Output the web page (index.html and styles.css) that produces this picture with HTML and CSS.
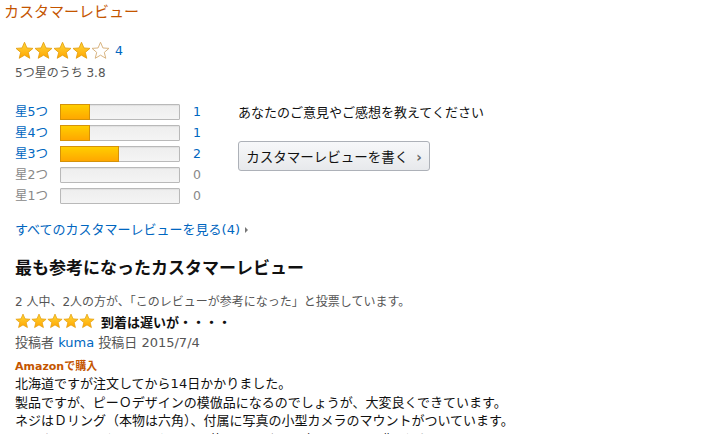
FILE: index.html
```html
<!DOCTYPE html>
<html lang="ja">
<head>
    <meta charset="UTF-8">
    <title>カスタマーレビュー</title>
    <link rel="stylesheet" href="styles.css">
</head>
<body>
    <svg width="0" height="0" class="defs">
        <defs>
            <linearGradient id="gold" x1="0" y1="0" x2="0" y2="1">
                <stop offset="0" stop-color="#ffd83a"/>
                <stop offset="1" stop-color="#ffa500"/>
            </linearGradient>
            <path id="star" d="M9 1.2 L11.3 6.6 L17 7 L12.6 10.8 L14 16.4 L9 13.4 L4 16.4 L5.4 10.8 L1 7 L6.7 6.6 Z"/>
        </defs>
    </svg>

    <h1 class="title">カスタマーレビュー</h1>

    <div class="content">
        <div class="summary">
            <div class="stars big">
                <svg viewBox="0 0 18 18"><use href="#star" class="full"/></svg>
                <svg viewBox="0 0 18 18"><use href="#star" class="full"/></svg>
                <svg viewBox="0 0 18 18"><use href="#star" class="full"/></svg>
                <svg viewBox="0 0 18 18"><use href="#star" class="full"/></svg>
                <svg viewBox="0 0 18 18"><use href="#star" class="empty"/></svg>
                <a href="#" class="count">4</a>
            </div>
            <p class="average">5つ星のうち 3.8</p>
        </div>

        <div class="overview">
            <table class="histogram">
                <tr>
                    <td class="label"><a href="#">星5つ</a></td>
                    <td class="track"><div class="bar"><div class="fill" style="width: 25%"></div></div></td>
                    <td class="num"><a href="#">1</a></td>
                </tr>
                <tr>
                    <td class="label"><a href="#">星4つ</a></td>
                    <td class="track"><div class="bar"><div class="fill" style="width: 25%"></div></div></td>
                    <td class="num"><a href="#">1</a></td>
                </tr>
                <tr>
                    <td class="label"><a href="#">星3つ</a></td>
                    <td class="track"><div class="bar"><div class="fill" style="width: 50%"></div></div></td>
                    <td class="num"><a href="#">2</a></td>
                </tr>
                <tr class="none">
                    <td class="label">星2つ</td>
                    <td class="track"><div class="bar"></div></td>
                    <td class="num">0</td>
                </tr>
                <tr class="none">
                    <td class="label">星1つ</td>
                    <td class="track"><div class="bar"></div></td>
                    <td class="num">0</td>
                </tr>
            </table>

            <div class="write">
                <p>あなたのご意見やご感想を教えてください</p>
                <button class="btn">カスタマーレビューを書く<span class="chev">›</span></button>
            </div>
        </div>

        <a href="#" class="all-link">すべてのカスタマーレビューを見る(4)<span class="tri"></span></a>

        <h2 class="heading">最も参考になったカスタマーレビュー</h2>

        <div class="review">
            <p class="helpful">2 人中、2人の方が、「このレビューが参考になった」と投票しています。</p>
            <div class="review-head">
                <div class="stars small">
                    <svg viewBox="0 0 18 18"><use href="#star" class="full"/></svg>
                    <svg viewBox="0 0 18 18"><use href="#star" class="full"/></svg>
                    <svg viewBox="0 0 18 18"><use href="#star" class="full"/></svg>
                    <svg viewBox="0 0 18 18"><use href="#star" class="full"/></svg>
                    <svg viewBox="0 0 18 18"><use href="#star" class="full"/></svg>
                </div>
                <span class="review-title">到着は遅いが・・・・</span>
            </div>
            <p class="byline">投稿者 <a href="#">kuma</a> 投稿日 2015/7/4</p>
            <p class="verified">Amazonで購入</p>
            <p class="body">
                北海道ですが注文してから14日かかりました。<br>
                製品ですが、ピーＯデザインの模倣品になるのでしょうが、大変良くできています。<br>
                ネジはＤリング（本物は六角）、付属に写真の小型カメラのマウントがついています。<br>
                このカメラに関しては、ちゃんと使えるかどうか確かめてから購入したいと思います。
            </p>
        </div>
    </div>
</body>
</html>
```

FILE: styles.css
```css
* {
    margin: 0;
    padding: 0;
    box-sizing: border-box;
}

body {
    font-family: "DejaVu Sans", "Noto Sans CJK JP", sans-serif;
    font-size: 13px;
    color: #111;
    background: #fff;
    overflow: hidden;
}

a {
    color: #0066c0;
    text-decoration: none;
}

.defs {
    position: absolute;
}

.full {
    fill: url(#gold);
    stroke: #e39c0c;
    stroke-width: 0.8;
}

.empty {
    fill: #fff;
    stroke: #d6b07a;
    stroke-width: 0.9;
}

.title {
    font-size: 15px;
    font-weight: normal;
    color: #c45500;
    line-height: 24px;
    padding-left: 4px;
}

.content {
    padding-left: 15px;
}

/* summary */
.summary {
    margin-top: 17px;
}

.stars {
    display: flex;
    align-items: center;
}

.stars.big svg {
    width: 19px;
    height: 19px;
}

.stars.big .count {
    margin-left: 5px;
    font-size: 12.5px;
    line-height: 18px;
}

.average {
    margin-top: 5px;
    font-size: 12px;
    line-height: 16px;
    color: #555;
}

/* histogram */
.overview {
    display: flex;
    margin-top: 20px;
}

.histogram {
    border-collapse: collapse;
    table-layout: fixed;
    width: 223px;
}

.histogram td {
    height: 21px;
    padding: 0;
    font-size: 12.5px;
    line-height: 21px;
}

.histogram .label {
    width: 45px;
}

.histogram .track {
    width: 120px;
}

.histogram .num {
    width: 58px;
    padding-left: 13px;
}

.histogram .none td {
    color: #888;
}

.bar {
    width: 120px;
    height: 16px;
    border: 1px solid #b9b9b9;
    background: linear-gradient(#eeeeee, #f4f4f4);
    border-radius: 1px;
    box-shadow: inset 0 1px 1px rgba(0, 0, 0, 0.06);
}

.fill {
    margin: -1px 0 0 -1px;
    height: 16px;
    background: linear-gradient(#ffce00, #ffa700);
    border: 1px solid #d4920a;
}

.write {
    padding-top: 1px;
}

.write p {
    font-size: 13px;
    line-height: 21px;
    color: #111;
}

.btn {
    margin-top: 18px;
    width: 192px;
    height: 30px;
    font-family: inherit;
    font-size: 13.5px;
    color: #111;
    background: linear-gradient(#f7f8fa, #e7e9ec);
    border: 1px solid #adb1b8;
    border-radius: 3px;
    cursor: pointer;
}

.chev {
    margin-left: 8px;
    color: #666;
    font-weight: bold;
}

/* links and heading */
.all-link {
    display: inline-block;
    margin-top: 15px;
    font-size: 13px;
    line-height: 18px;
}

.tri {
    display: inline-block;
    margin-left: 5px;
    width: 0;
    height: 0;
    border-top: 3px solid transparent;
    border-bottom: 3px solid transparent;
    border-left: 3px solid #777;
    vertical-align: 1px;
}

.heading {
    margin-top: 17px;
    font-size: 17px;
    font-weight: bold;
    line-height: 24px;
    color: #111;
}

/* review */
.helpful {
    margin-top: 14px;
    font-size: 12px;
    line-height: 16px;
    color: #555;
}

.review-head {
    display: flex;
    align-items: center;
    margin-top: 2px;
    height: 18px;
}

.stars.small svg {
    width: 16px;
    height: 16px;
}

.review-title {
    margin-left: 6px;
    font-size: 13px;
    font-weight: bold;
}

.byline {
    margin-top: 4px;
    font-size: 13px;
    line-height: 18px;
    color: #555;
}

.verified {
    margin-top: 8px;
    font-size: 11px;
    font-weight: bold;
    line-height: 14px;
    color: #c45500;
}

.body {
    margin-top: 1px;
    font-size: 13px;
    line-height: 18.7px;
    color: #111;
}
```
